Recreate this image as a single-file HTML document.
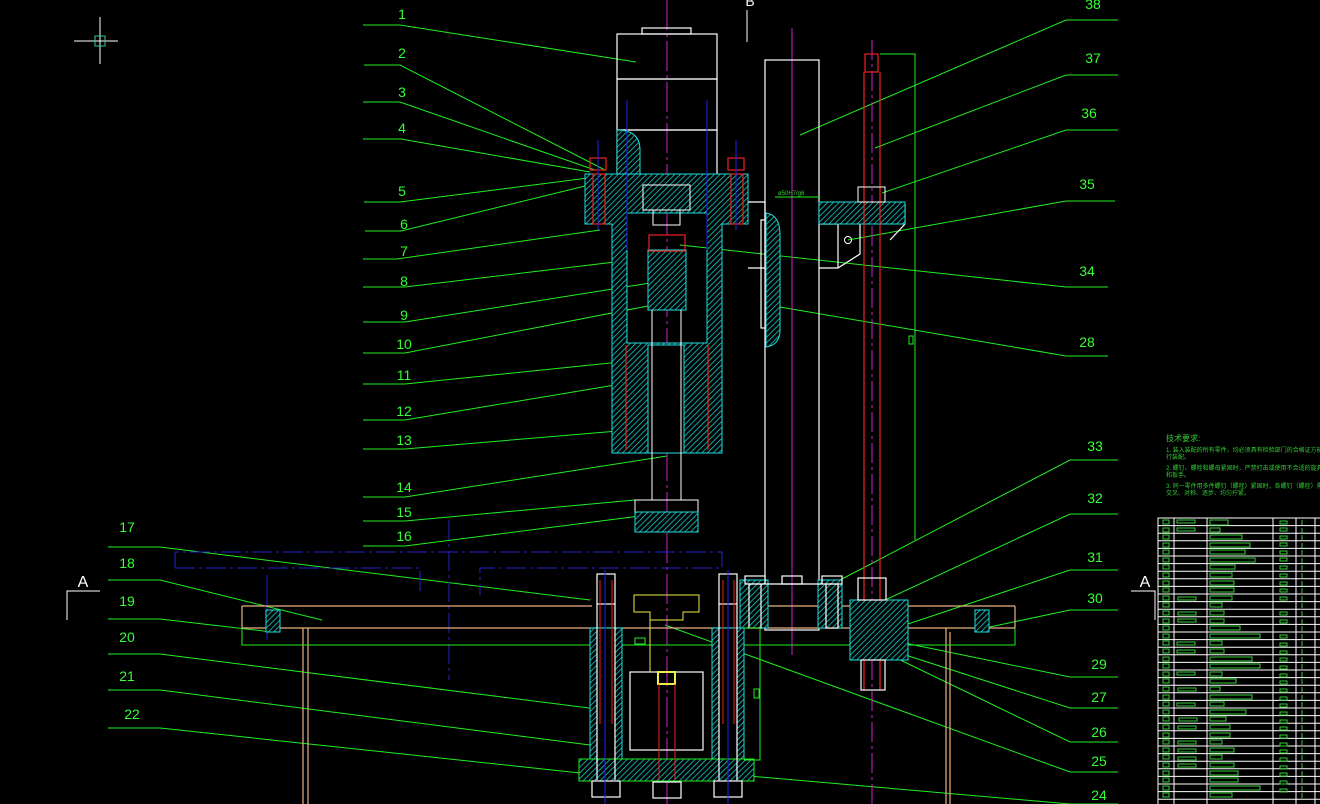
<!DOCTYPE html>
<html><head><meta charset="utf-8"><style>
html,body{margin:0;padding:0;background:#000;}
svg{display:block}
text{font-family:"Liberation Sans",sans-serif;font-size:14px;fill:#3f3;}
g.n text{font-family:"Liberation Sans","Noto Sans CJK SC",sans-serif;font-size:6px;fill:#3c3;}
</style></head><body>
<svg width="1320" height="804" viewBox="0 0 1320 804" xmlns="http://www.w3.org/2000/svg">
<defs>
<pattern id="h" width="4" height="4" patternUnits="userSpaceOnUse" patternTransform="rotate(45)">
<rect width="4" height="4" fill="#000"/><line x1="0" y1="0" x2="0" y2="4" stroke="#1cc" stroke-width="1.6"/></pattern>
</defs>
<rect width="1320" height="804" fill="#000"/>
<g stroke="#fff" stroke-width="1"><line x1="74" y1="41" x2="118" y2="41"/><line x1="100" y1="17" x2="100" y2="64"/></g>
<rect x="95" y="36" width="10" height="10" fill="none" stroke="#3c9"/>

<g stroke="#2e2" stroke-width="1" fill="none">
<polyline points="363,25 400,25 636,62"/>
<polyline points="364,65 400,65 605,170"/>
<polyline points="363,102 400,102 595,170"/>
<polyline points="363,139 401,139 590,172"/>
<polyline points="364,202 400,202 588,178"/>
<polyline points="365,231 401,231 585,186"/>
<polyline points="363,259 397,259 600,230"/>
<polyline points="363,287 405,287 615,262"/>
<polyline points="363,322 405,322 650,283"/>
<polyline points="363,353 405,353 648,306"/>
<polyline points="363,384 405,384 620,362"/>
<polyline points="363,420 405,420 615,385"/>
<polyline points="363,449 405,449 630,430"/>
<polyline points="363,497 405,497 667,456"/>
<polyline points="363,521 405,521 635,500"/>
<polyline points="363,546 405,546 640,516"/>
<polyline points="108,547 160,547 590,600"/>
<polyline points="108,580 160,580 322,620"/>
<polyline points="108,619 160,619 272,632"/>
<polyline points="108,654 160,654 605,710"/>
<polyline points="108,690 160,690 590,745"/>
<polyline points="108,728 160,728 580,773"/>
<polyline points="1118,20 1066,20 800,135"/>
<polyline points="1118,75 1066,75 875,148"/>
<polyline points="1118,130 1066,130 882,193"/>
<polyline points="1115,201 1066,201 848,240"/>
<polyline points="1108,287 1066,287 680,245"/>
<polyline points="1108,356 1066,356 780,307"/>
<polyline points="1118,460 1070,460 840,580"/>
<polyline points="1118,514 1070,514 885,600"/>
<polyline points="1118,570 1070,570 905,625"/>
<polyline points="1118,610 1070,610 985,628"/>
<polyline points="1118,677 1070,677 890,640"/>
<polyline points="1118,708 1070,708 890,650"/>
<polyline points="1118,742 1070,742 890,655"/>
<polyline points="1118,772 1070,772 665,625"/>
<polyline points="1118,804 1070,804 680,770"/>
</g>
<g text-anchor="middle">
<text x="402" y="19">1</text><text x="402" y="58">2</text><text x="402" y="97">3</text><text x="402" y="133">4</text>
<text x="402" y="196">5</text><text x="404" y="229">6</text><text x="404" y="256">7</text><text x="404" y="286">8</text>
<text x="404" y="320">9</text><text x="404" y="349">10</text><text x="404" y="380">11</text><text x="404" y="416">12</text>
<text x="404" y="445">13</text><text x="404" y="492">14</text><text x="404" y="517">15</text><text x="404" y="541">16</text>
<text x="127" y="532">17</text><text x="127" y="568">18</text><text x="127" y="606">19</text><text x="127" y="642">20</text>
<text x="127" y="681">21</text><text x="132" y="719">22</text>
<text x="1093" y="9">38</text><text x="1093" y="63">37</text><text x="1089" y="118">36</text><text x="1087" y="189">35</text>
<text x="1087" y="276">34</text><text x="1087" y="347">28</text><text x="1095" y="451">33</text><text x="1095" y="503">32</text>
<text x="1095" y="562">31</text><text x="1095" y="603">30</text><text x="1099" y="669">29</text><text x="1099" y="702">27</text>
<text x="1099" y="737">26</text><text x="1099" y="766">25</text><text x="1099" y="800">24</text>
<text x="750" y="6" style="fill:#fff">B</text>
<text x="83" y="587" style="fill:#fff;font-size:16px">A</text>
<text x="1145" y="587" style="fill:#fff;font-size:16px">A</text>
</g>
<g stroke="#fff" fill="none"><polyline points="100,591 67,591 67,620"/><polyline points="1131,591 1155,591 1155,620"/><line x1="747" y1="10" x2="747" y2="42"/></g>

<g stroke-width="1" fill="none">
<line x1="667" y1="0" x2="667" y2="804" stroke="#c2c" stroke-dasharray="30,4,3,4"/>
<line x1="792" y1="28" x2="792" y2="655" stroke="#c2c"/>
<line x1="872" y1="40" x2="872" y2="804" stroke="#c2c" stroke-dasharray="20,4,3,4"/>
<line x1="449" y1="520" x2="449" y2="680" stroke="#22c" stroke-dasharray="20,4,3,4"/>
<polyline points="175,568 175,552 722,552 722,568 480,568 480,595" stroke="#22c" stroke-dasharray="20,4,3,4"/>
<polyline points="175,568 420,568 420,595" stroke="#22c" stroke-dasharray="20,4,3,4"/>
<line x1="267" y1="575" x2="267" y2="640" stroke="#22c"/>
</g>

<g stroke="#fff" fill="none" stroke-width="1.2">
<rect x="642" y="28" width="49" height="6"/>
<rect x="617" y="34" width="100" height="45"/>
<rect x="617" y="79" width="100" height="51"/>
<rect x="617" y="130" width="100" height="45"/>
</g>
<g stroke="#2dd" stroke-width="1">
<path d="M585,174 H748 V224 H722 V453 H612 V224 H585 Z M627,213 V343 H707 V213 Z" fill="url(#h)" fill-rule="evenodd"/>
<path d="M617,130 Q640,130 640,150 V174 H617 Z" fill="url(#h)"/>
<rect x="648" y="250" width="38" height="60" fill="url(#h)"/>
<rect x="648" y="345" width="36" height="108" fill="#000"/>
</g>
<g stroke="#fff" fill="none">
<rect x="643" y="185" width="47" height="25"/><rect x="653" y="210" width="27" height="15"/>
<line x1="652" y1="310" x2="652" y2="500"/><line x1="681" y1="310" x2="681" y2="500"/>
<rect x="635" y="500" width="63" height="12"/>
</g>
<rect x="635" y="512" width="63" height="20" fill="url(#h)" stroke="#2dd"/>
<g stroke="#e22" fill="none" stroke-width="1.2">
<rect x="590" y="158" width="16" height="12"/><rect x="593" y="174" width="12" height="50"/>
<rect x="728" y="158" width="16" height="12"/><rect x="731" y="174" width="12" height="50"/>
<rect x="649" y="235" width="36" height="16"/>
<line x1="626" y1="345" x2="626" y2="450"/><line x1="708" y1="345" x2="708" y2="450"/>
</g>
<g stroke="#22e"><line x1="627" y1="100" x2="627" y2="250"/><line x1="707" y1="100" x2="707" y2="250"/><line x1="598" y1="140" x2="598" y2="230"/><line x1="736" y1="140" x2="736" y2="230"/></g>

<g stroke="#fff" fill="none" stroke-width="1.2">
<rect x="765" y="60" width="54" height="570"/>
<polyline points="748,202 765,202 765,268 748,268"/>
<rect x="761" y="220" width="10" height="108"/>
<polyline points="819,224 838,224 838,268 819,268"/>
<polyline points="838,268 860,254 860,224"/>
<polyline points="905,204 905,224 890,240"/>
</g>
<path d="M766,213 Q780,215 780,235 V330 Q780,345 766,347 Z" fill="url(#h)" stroke="#2dd"/>
<rect x="819" y="202" width="86" height="22" fill="url(#h)" stroke="#2dd"/>
<circle cx="848" cy="240" r="3.5" fill="none" stroke="#fff"/>
<line x1="775" y1="197" x2="819" y2="197" stroke="#2e2"/>
<g class="n"><text x="778" y="195">ø50H7/g6</text></g>
<g stroke="#e22" fill="none" stroke-width="1.2">
<line x1="864" y1="72" x2="864" y2="690"/><line x1="880" y1="72" x2="880" y2="690"/>
<rect x="865" y="54" width="13" height="18"/>
</g>
<rect x="858" y="187" width="27" height="15" fill="none" stroke="#fff"/>
<polyline points="880,54 915,54 915,540" stroke="#2e2" fill="none"/>
<rect x="909" y="336" width="4" height="8" fill="none" stroke="#2e2"/>

<g stroke="#e9b080" fill="none" stroke-width="1.2">
<line x1="242" y1="606" x2="592" y2="606"/><line x1="740" y1="606" x2="1015" y2="606"/>
<line x1="242" y1="628" x2="1015" y2="628"/>
<line x1="242" y1="606" x2="242" y2="628"/><line x1="1015" y1="606" x2="1015" y2="628"/>
<line x1="303" y1="628" x2="303" y2="804"/><line x1="308" y1="628" x2="308" y2="804"/>
<line x1="946" y1="628" x2="946" y2="804"/><line x1="950" y1="632" x2="950" y2="804"/>
</g>
<polyline points="242,628 242,645 1015,645 1015,628" stroke="#2e2" fill="none"/>
<g stroke="#2dd">
<rect x="590" y="628" width="32" height="132" fill="url(#h)"/><rect x="597" y="628" width="18" height="132" fill="#000"/>
<rect x="712" y="628" width="32" height="132" fill="url(#h)"/><rect x="719" y="628" width="18" height="132" fill="#000"/>
<rect x="579" y="759" width="175" height="22" fill="url(#h)" stroke="#2e2"/>
<rect x="740" y="580" width="28" height="48" fill="url(#h)"/><rect x="818" y="580" width="24" height="48" fill="url(#h)"/>
<rect x="850" y="600" width="58" height="60" fill="url(#h)"/>
<rect x="266" y="610" width="14" height="22" fill="url(#h)"/><rect x="975" y="610" width="14" height="22" fill="url(#h)"/>
</g>
<g stroke="#fff" fill="none" stroke-width="1.2">
<rect x="597" y="574" width="18" height="30"/><rect x="719" y="574" width="18" height="30"/>
<line x1="597" y1="604" x2="597" y2="780"/><line x1="615" y1="604" x2="615" y2="780"/>
<line x1="719" y1="604" x2="719" y2="780"/><line x1="737" y1="604" x2="737" y2="780"/>
<rect x="592" y="781" width="28" height="16"/><rect x="714" y="781" width="28" height="16"/>
<rect x="630" y="672" width="73" height="78"/><rect x="653" y="782" width="28" height="16"/>
<rect x="745" y="576" width="20" height="8"/><rect x="782" y="576" width="20" height="8"/><rect x="822" y="576" width="20" height="8"/>
<line x1="765" y1="584" x2="822" y2="584"/>
<rect x="861" y="660" width="24" height="30"/><rect x="858" y="578" width="28" height="22"/>
<rect x="749" y="584" width="12" height="44"/><rect x="826" y="584" width="12" height="44"/>
</g>
<path d="M634,595 H699 V612 H683 V620 H650 V612 H634 Z" fill="none" stroke="#ee4"/>
<polyline points="650,620 650,672 M683,620 683,672" stroke="#ee4" fill="none"/>
<rect x="658" y="672" width="17" height="12" fill="none" stroke="#ee4" stroke-width="2"/>
<g stroke="#e22"><line x1="659" y1="684" x2="659" y2="780"/><line x1="675" y1="684" x2="675" y2="780"/>
<line x1="600" y1="580" x2="600" y2="724"/><line x1="612" y1="580" x2="612" y2="724"/><line x1="723" y1="580" x2="723" y2="724"/><line x1="734" y1="580" x2="734" y2="724"/></g>
<g stroke="#22e"><line x1="605" y1="570" x2="605" y2="804"/><line x1="728" y1="570" x2="728" y2="804"/></g>
<polyline points="744,628 760,628 760,760 744,760" stroke="#2e2" fill="none"/>
<rect x="754" y="689" width="5" height="9" fill="none" stroke="#2e2"/><rect x="635" y="638" width="10" height="6" fill="none" stroke="#2e2"/>

<g class="n">
<text x="1166" y="441" style="font-size:8px">技术要求:</text>
<text x="1166" y="452">1. 装入装配的所有零件，均必须具有检验部门的合格证方能进</text>
<text x="1166" y="459">行装配。</text>
<text x="1166" y="470">2. 螺钉、螺栓和螺母紧固时，严禁打击或使用不合适的旋具</text>
<text x="1166" y="477">和扳手。</text>
<text x="1166" y="488">3. 同一零件用多件螺钉（螺栓）紧固时，各螺钉（螺栓）需</text>
<text x="1166" y="495">交叉、对称、逐步、均匀拧紧。</text>
</g>
<g stroke="#fff" stroke-width="1" fill="none">
<rect x="1158" y="518" width="170" height="290"/>
<line x1="1174" y1="518" x2="1174" y2="804"/><line x1="1207" y1="518" x2="1207" y2="804"/>
<line x1="1273" y1="518" x2="1273" y2="804"/><line x1="1296" y1="518" x2="1296" y2="804"/><line x1="1315" y1="518" x2="1315" y2="804"/>
<path d="M1158,525.6H1320M1158,533.2H1320M1158,540.8H1320M1158,548.4H1320M1158,556H1320M1158,563.6H1320M1158,571.2H1320M1158,578.8H1320M1158,586.4H1320M1158,594H1320M1158,601.6H1320M1158,609.2H1320M1158,616.8H1320M1158,624.4H1320M1158,632H1320M1158,639.6H1320M1158,647.2H1320M1158,654.8H1320M1158,662.4H1320M1158,670H1320M1158,677.6H1320M1158,685.2H1320M1158,692.8H1320M1158,700.4H1320M1158,708H1320M1158,715.6H1320M1158,723.2H1320M1158,730.8H1320M1158,738.4H1320M1158,746H1320M1158,753.6H1320M1158,761.2H1320M1158,768.8H1320M1158,776.4H1320M1158,784H1320M1158,791.6H1320M1158,799.2H1320"/>
</g>
<g stroke="#3c3" fill="none" stroke-width="1">
<path d="M1163,520h6v4h-6zM1163,528h6v4h-6zM1163,535h6v4h-6zM1163,543h6v4h-6zM1163,550h6v4h-6zM1163,558h6v4h-6zM1163,565h6v4h-6zM1163,573h6v4h-6zM1163,581h6v4h-6zM1163,588h6v4h-6zM1163,596h6v4h-6zM1163,603h6v4h-6zM1163,611h6v4h-6zM1163,619h6v4h-6zM1163,626h6v4h-6zM1163,634h6v4h-6zM1163,641h6v4h-6zM1163,649h6v4h-6zM1163,657h6v4h-6zM1163,664h6v4h-6zM1163,672h6v4h-6zM1163,679h6v4h-6zM1163,687h6v4h-6zM1163,695h6v4h-6zM1163,702h6v4h-6zM1163,710h6v4h-6zM1163,717h6v4h-6zM1163,725h6v4h-6zM1163,733h6v4h-6zM1163,740h6v4h-6zM1163,748h6v4h-6zM1163,755h6v4h-6zM1163,763h6v4h-6zM1163,771h6v4h-6zM1163,778h6v4h-6zM1163,786h6v4h-6zM1163,793h6v4h-6z"/>
<path d="M1177,520h18v3h-18zM1177,528h18v3h-18zM1178,597h18v3h-18zM1178,612h18v3h-18zM1178,619h18v3h-18zM1177,642h18v3h-18zM1177,650h18v3h-18zM1177,672h18v3h-18zM1178,688h18v3h-18zM1177,703h18v3h-18zM1179,718h18v3h-18zM1178,726h18v3h-18zM1178,741h18v3h-18zM1178,749h18v3h-18zM1178,757h18v3h-18zM1178,764h18v3h-18z"/>
<path d="M1210,520h18v5h-18zM1210,528h10v4h-10zM1210,535h32v4h-32zM1210,543h40v4h-40zM1210,550h35v4h-35zM1210,558h45v4h-45zM1210,565h25v4h-25zM1210,573h22v4h-22zM1210,581h24v4h-24zM1210,588h24v4h-24zM1210,596h22v4h-22zM1210,603h12v4h-12zM1210,611h14v4h-14zM1210,619h14v4h-14zM1210,626h30v4h-30zM1210,634h50v4h-50zM1210,641h12v4h-12zM1210,649h14v4h-14zM1210,657h42v4h-42zM1210,664h50v4h-50zM1210,672h12v4h-12zM1210,679h26v4h-26zM1210,687h10v4h-10zM1210,695h42v4h-42zM1210,702h14v4h-14zM1210,710h36v4h-36zM1210,717h16v4h-16zM1210,725h20v4h-20zM1210,733h20v4h-20zM1210,740h12v4h-12zM1210,748h24v4h-24zM1210,755h12v4h-12zM1210,763h24v4h-24zM1210,771h28v4h-28zM1210,778h28v4h-28zM1210,786h50v4h-50zM1210,793h22v4h-22z"/>
<path d="M1280,521h7v3h-7zM1280,528h7v3h-7zM1280,536h7v3h-7zM1280,543h7v3h-7zM1280,551h7v3h-7zM1280,558h7v3h-7zM1280,566h7v3h-7zM1280,574h7v3h-7zM1280,582h7v3h-7zM1280,589h7v3h-7zM1280,597h7v3h-7zM1280,612h7v3h-7zM1280,620h7v3h-7zM1280,635h7v3h-7zM1280,643h7v3h-7zM1280,651h7v3h-7zM1280,658h7v3h-7zM1280,666h7v3h-7zM1280,674h7v3h-7zM1280,681h7v3h-7zM1280,689h7v3h-7zM1280,697h7v3h-7zM1280,704h7v3h-7zM1280,712h7v3h-7zM1280,720h7v3h-7zM1280,727h7v3h-7zM1280,735h7v3h-7zM1280,743h7v3h-7zM1280,750h7v3h-7zM1280,758h7v3h-7zM1280,766h7v3h-7zM1280,773h7v3h-7zM1280,781h7v3h-7zM1280,789h7v3h-7z"/>
<path d="M1302,520v5M1302,528v5M1302,535v5M1302,543v5M1302,550v5M1302,558v5M1302,565v5M1302,573v5M1302,581v5M1302,588v5M1302,596v5M1302,603v5M1302,611v5M1302,619v5M1302,626v5M1302,634v5M1302,641v5M1302,649v5M1302,657v5M1302,664v5M1302,672v5M1302,679v5M1302,687v5M1302,695v5M1302,702v5M1302,710v5M1302,717v5M1302,725v5M1302,733v5M1302,740v5M1302,748v5M1302,755v5M1302,763v5M1302,771v5M1302,778v5M1302,786v5M1302,793v5"/>
</g>
</svg>
</body></html>
